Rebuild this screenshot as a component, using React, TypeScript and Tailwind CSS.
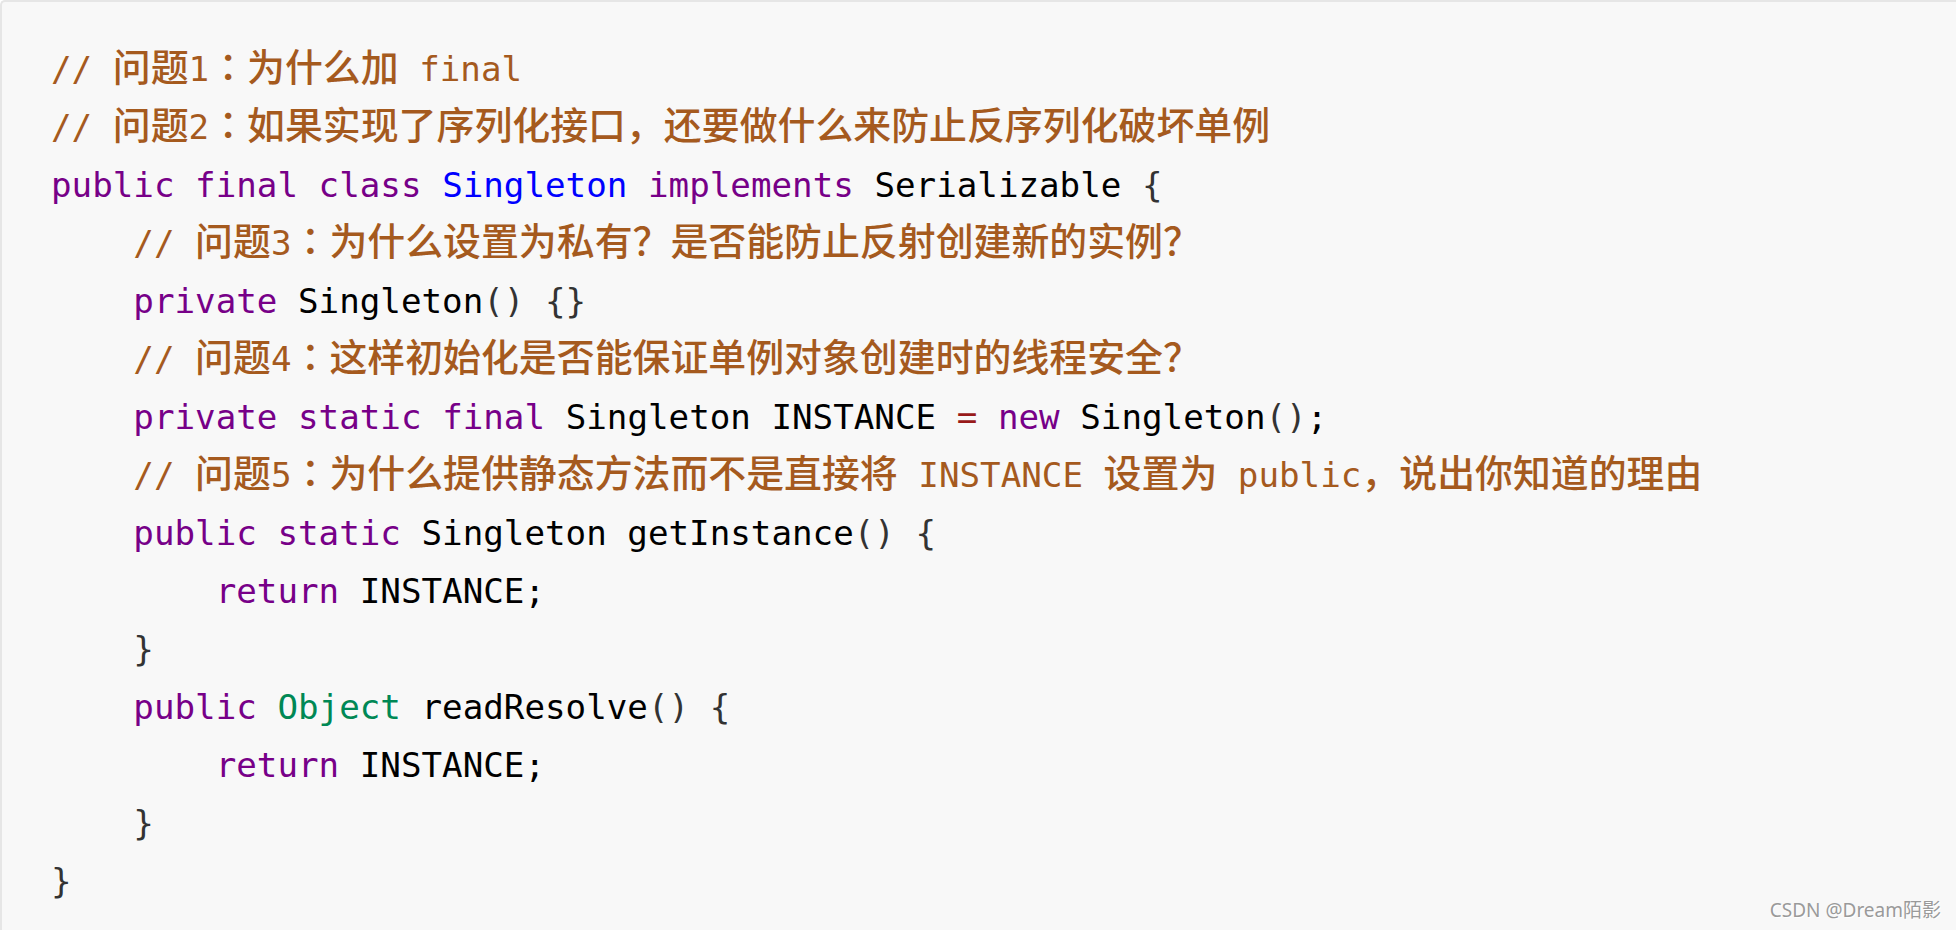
import type { ReactNode } from "react";

// runs of CJK text get the wider CJK face, like the fallback font in the screenshot
const CJK = /([\u3000-\u303f\u4e00-\u9fff\uff00-\uffef]+)/;

function CjkRun({ text }: { text: string }) {
  // the full-width colon sits centred in the reference, as in the TC face
  const bits = text.split(/(：)/);
  return (
    <span className="font-['Noto_Sans_CJK_SC','Noto_Sans',sans-serif] font-medium text-[37.9px] leading-none">
      {bits.map((b, i) =>
        b === "：" ? (
          <span key={i} className="font-['Noto_Sans_CJK_TC',sans-serif]">
            {b}
          </span>
        ) : (
          b
        )
      )}
    </span>
  );
}

function Cm({ children }: { children: string }) {
  const parts = children.split(CJK);
  return (
    <span className="text-[#a55a1e]">
      {parts.map((p, i) => (i % 2 === 1 ? <CjkRun key={i} text={p} /> : p))}
    </span>
  );
}

const K = ({ children }: { children: ReactNode }) => <span className="text-[#770088]">{children}</span>;
const B = ({ children }: { children: ReactNode }) => <span className="text-[#333333]">{children}</span>;

function Line({ children }: { children?: ReactNode }) {
  return <div className="h-[58px] leading-[58px]">{children}</div>;
}

export default function App() {
  return (
    <div className="relative w-full h-[930px] overflow-hidden bg-[#f8f8f8] border-t-2 border-l-2 border-[#e6e6e6] rounded-tl-[5px]">
      <pre className="pl-[49px] pt-[38px] whitespace-pre text-black font-['DejaVu_Sans_Mono','Noto_Sans_CJK_SC',monospace] text-[34.2px]">
        <Line>
          <Cm>{"// 问题1：为什么加 final"}</Cm>
        </Line>
        <Line>
          <Cm>{"// 问题2：如果实现了序列化接口，还要做什么来防止反序列化破坏单例"}</Cm>
        </Line>
        <Line>
          <K>public</K> <K>final</K> <K>class</K> <span className="text-[#0000ff]">Singleton</span>{" "}
          <K>implements</K> Serializable <B>{"{"}</B>
        </Line>
        <Line>
          {"    "}
          <Cm>{"// 问题3：为什么设置为私有？是否能防止反射创建新的实例？"}</Cm>
        </Line>
        <Line>
          {"    "}
          <K>private</K> Singleton<B>()</B> <B>{"{}"}</B>
        </Line>
        <Line>
          {"    "}
          <Cm>{"// 问题4：这样初始化是否能保证单例对象创建时的线程安全？"}</Cm>
        </Line>
        <Line>
          {"    "}
          <K>private</K> <K>static</K> <K>final</K> Singleton INSTANCE <span className="text-[#981a1a]">=</span>{" "}
          <K>new</K> Singleton<B>()</B>;
        </Line>
        <Line>
          {"    "}
          <Cm>{"// 问题5：为什么提供静态方法而不是直接将 INSTANCE 设置为 public，说出你知道的理由"}</Cm>
        </Line>
        <Line>
          {"    "}
          <K>public</K> <K>static</K> Singleton getInstance<B>()</B> <B>{"{"}</B>
        </Line>
        <Line>
          {"        "}
          <K>return</K> INSTANCE;
        </Line>
        <Line>
          {"    "}
          <B>{"}"}</B>
        </Line>
        <Line>
          {"    "}
          <K>public</K> <span className="text-[#008855]">Object</span> readResolve<B>()</B> <B>{"{"}</B>
        </Line>
        <Line>
          {"        "}
          <K>return</K> INSTANCE;
        </Line>
        <Line>
          {"    "}
          <B>{"}"}</B>
        </Line>
        <Line>
          <B>{"}"}</B>
        </Line>
      </pre>

      {/* watermark */}
      <div className="absolute right-[15px] bottom-[6px] font-['Noto_Sans','Noto_Sans_CJK_SC',sans-serif] text-[19px] text-[#9a9a9a] [text-shadow:1px_1px_0_#ffffff]">
        CSDN @Dream陌影
      </div>
    </div>
  );
}
